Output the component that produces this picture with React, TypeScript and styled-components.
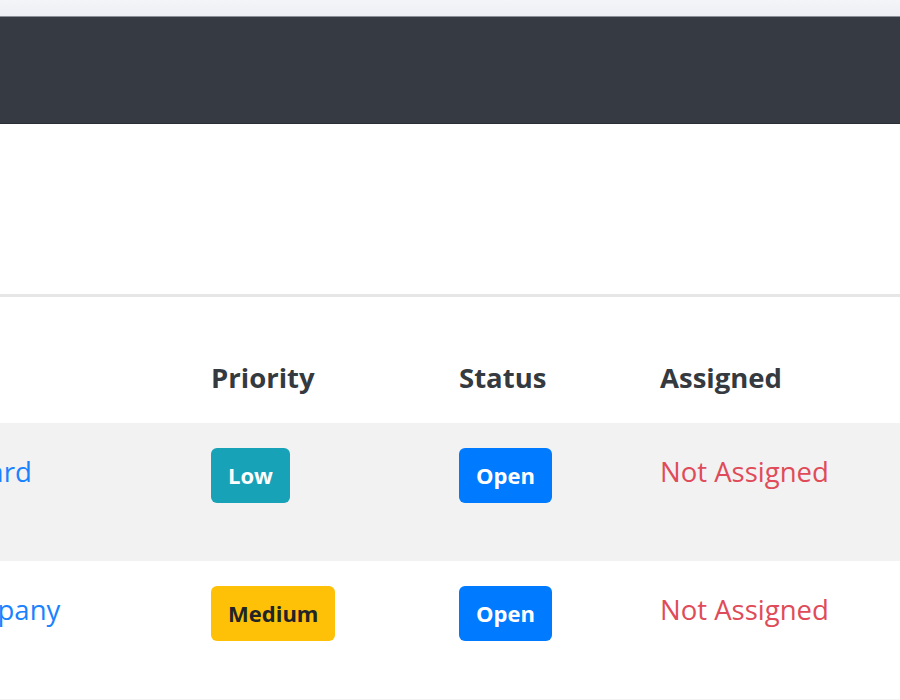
import styled, { createGlobalStyle } from "styled-components";

type Tone = "info" | "warning" | "primary";

type Ticket = {
    id: number;
    title: string;
    priority: string;
    priorityTone: Tone;
    status: string;
    assigned: string | null;
};

const tickets: Ticket[] = [
    { id: 1, title: "Fix the dashboard", priority: "Low", priorityTone: "info", status: "Open", assigned: null },
    { id: 2, title: "Add a new company", priority: "Medium", priorityTone: "warning", status: "Open", assigned: null },
    { id: 3, title: "Export report to PDF", priority: "High", priorityTone: "info", status: "Open", assigned: null },
];

const tones: Record<Tone, { bg: string; fg: string }> = {
    info: { bg: "#17a2b8", fg: "#ffffff" },
    warning: { bg: "#ffc107", fg: "#212529" },
    primary: { bg: "#007bff", fg: "#ffffff" },
};

const GlobalStyle = createGlobalStyle`
    html, body {
        margin: 0;
        padding: 0;
        background: #ffffff;
        overflow: hidden;
    }
    body {
        font-family: "Open Sans", "Noto Sans", "Liberation Sans", sans-serif;
        color: #212529;
    }
`;

function App() {
    return (
        <Page>
            <GlobalStyle />
            <BrowserStrip />
            <NavBar />
            <PageHeader />
            <TableWrap>
                <Table>
                    <colgroup>
                        <col style={{ width: 410 }} />
                        <col style={{ width: 248 }} />
                        <col style={{ width: 201 }} />
                        <col style={{ width: 260 }} />
                    </colgroup>
                    <thead>
                        <tr>
                            <Th>Title</Th>
                            <Th>Priority</Th>
                            <Th>Status</Th>
                            <Th>Assigned</Th>
                        </tr>
                    </thead>
                    <tbody>
                        {tickets.map((t, i) => (
                            <Row key={t.id} $striped={i % 2 === 0}>
                                <Td><TitleLink href="#">{t.title}</TitleLink></Td>
                                <Td><Badge $tone={t.priorityTone}>{t.priority}</Badge></Td>
                                <Td><Badge $tone="primary">{t.status}</Badge></Td>
                                <Td><Unassigned>{t.assigned ?? "Not Assigned"}</Unassigned></Td>
                            </Row>
                        ))}
                    </tbody>
                </Table>
            </TableWrap>
        </Page>
    );
}

const Page = styled.div`
    width: 900px;
    height: 700px;
    overflow: hidden;
`;

const BrowserStrip = styled.div`
    height: 16px;
    background: linear-gradient(#f4f5f9, #eceef3);
    border-bottom: 1px solid #8b8f97;
`;

const NavBar = styled.nav`
    height: 106px;
    background: #363a42;
    border-bottom: 1px solid #2b2f35;
`;

const PageHeader = styled.header`
    height: 170px;
`;

const TableWrap = styled.div`
    margin-left: -219px;
    border-top: 3px solid #e6e6e6;
`;

const Table = styled.table`
    table-layout: fixed;
    width: 1119px;
    border-collapse: collapse;
    font-size: 27.5px;
    line-height: 1.5;
`;

const Th = styled.th`
    text-align: left;
    vertical-align: bottom;
    height: 126px;
    box-sizing: border-box;
    padding: 0 20px 25px;
    font-weight: 700;
    color: #343a40;
`;

const Row = styled.tr<{ $striped: boolean }>`
    background: ${(p) => (p.$striped ? "#f2f2f2" : "#ffffff")};
    height: 138px;
`;

const Td = styled.td`
    vertical-align: top;
    padding: 25px 20px 0;
    white-space: nowrap;
`;

const TitleLink = styled.a`
    display: inline-block;
    margin-top: 3px;
    color: #1a82ff;
    text-decoration: none;
`;

const Badge = styled.span<{ $tone: Tone }>`
    display: inline-flex;
    align-items: center;
    height: 55px;
    padding: 0 17px;
    border-radius: 6px;
    font-size: 22px;
    font-weight: 700;
    background: ${(p) => tones[p.$tone].bg};
    color: ${(p) => tones[p.$tone].fg};
`;

const Unassigned = styled.span`
    display: inline-block;
    margin-top: 3px;
    color: #e04b59;
`;

export default App;
